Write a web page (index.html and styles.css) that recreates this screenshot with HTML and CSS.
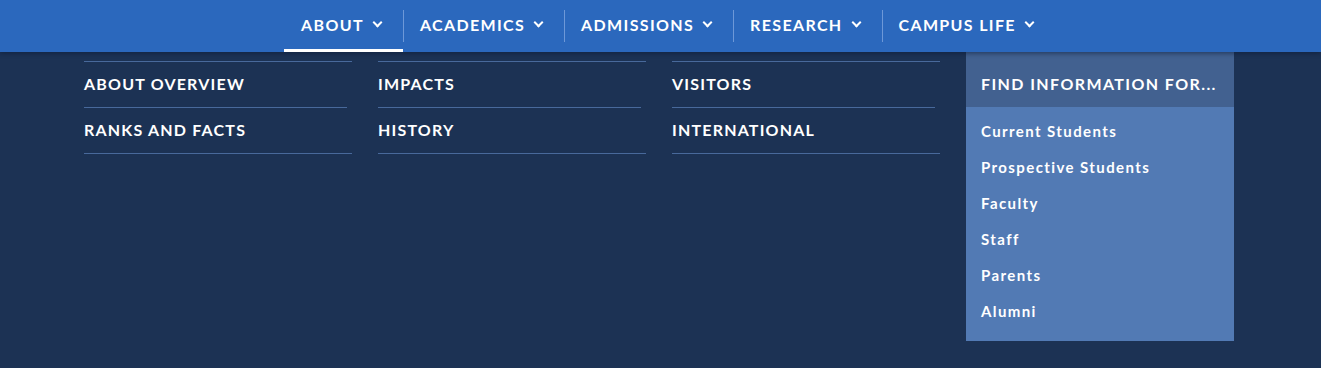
FILE: index.html
```html
<!DOCTYPE html>
<html>
<head>
    <title>University Navigation</title>
    <link rel="stylesheet" href="styles.css">
</head>
<body>
    <nav class="main-nav">
        <ul class="nav-list">
            <li class="nav-item active">ABOUT <span class="chev"></span></li>
            <li class="nav-item">ACADEMICS <span class="chev"></span></li>
            <li class="nav-item">ADMISSIONS <span class="chev"></span></li>
            <li class="nav-item">RESEARCH <span class="chev"></span></li>
            <li class="nav-item">CAMPUS LIFE <span class="chev"></span></li>
        </ul>
    </nav>

    <div class="dropdown">
        <ul class="link-col">
            <li><a href="#">ABOUT OVERVIEW</a></li>
            <li><a href="#">RANKS AND FACTS</a></li>
        </ul>
        <ul class="link-col">
            <li><a href="#">IMPACTS</a></li>
            <li><a href="#">HISTORY</a></li>
        </ul>
        <ul class="link-col">
            <li><a href="#">VISITORS</a></li>
            <li><a href="#">INTERNATIONAL</a></li>
        </ul>
        <div class="audience">
            <h3>FIND INFORMATION FOR...</h3>
            <ul>
                <li><a href="#">Current Students</a></li>
                <li><a href="#">Prospective Students</a></li>
                <li><a href="#">Faculty</a></li>
                <li><a href="#">Staff</a></li>
                <li><a href="#">Parents</a></li>
                <li><a href="#">Alumni</a></li>
            </ul>
        </div>
    </div>
</body>
</html>
```

FILE: styles.css
```css
body { margin: 0; background: #1c3254; font-family: Lato, "Open Sans", sans-serif; color: #fff; height: 368px; overflow: hidden; }
ul { list-style: none; margin: 0; padding: 0; }
a { color: #fff; text-decoration: none; }

.main-nav { background: #2b68bd; height: 52px; position: relative; z-index: 2; box-shadow: 0 2px 4px rgba(10, 25, 50, 0.45); }
.nav-list { display: flex; justify-content: center; height: 52px; padding-left: 18px; }
.nav-item { display: flex; align-items: center; gap: 10px; padding: 0 22px 3px 17px; font-size: 16px; font-weight: 700; letter-spacing: 1.35px; position: relative; }
.nav-item + .nav-item::before { content: ""; position: absolute; left: 0; top: 10px; height: 32px; width: 1px; background: #6d98d8; }
.nav-item.active::after { content: ""; position: absolute; left: 0; right: 0; bottom: 0; height: 3px; background: #fff; }
.chev { width: 5px; height: 5px; border-right: 2px solid #fff; border-bottom: 2px solid #fff; transform: rotate(45deg); margin-top: -4px; }

.dropdown { display: flex; gap: 26px; padding-left: 84px; }
.link-col { width: 268px; margin-top: 9px; }
.link-col li { height: 45px; display: flex; align-items: center; }
.link-col li:first-child { border-top: 1px solid #48699b; position: relative; }
.link-col li:first-child::after { content: ""; position: absolute; left: 0; bottom: -1px; width: 263px; height: 1px; background: #48699b; }
.link-col li:last-child { margin-top: 1px; border-bottom: 1px solid #48699b; }
.link-col a { font-size: 16px; font-weight: 700; letter-spacing: 1.2px; padding-bottom: 2px; }

.audience { width: 268px; height: 289px; background: #527ab4; }
.audience h3 { box-sizing: border-box; margin: 0; height: 55px; background: #426190; display: flex; align-items: center; padding: 8px 15px 0; font-size: 16px; font-weight: 700; letter-spacing: 1.4px; }
.audience ul { padding: 6px 15px 0; }
.audience li { height: 36px; display: flex; align-items: center; }
.audience a { font-size: 15px; font-weight: 700; letter-spacing: 1.4px; }
```
